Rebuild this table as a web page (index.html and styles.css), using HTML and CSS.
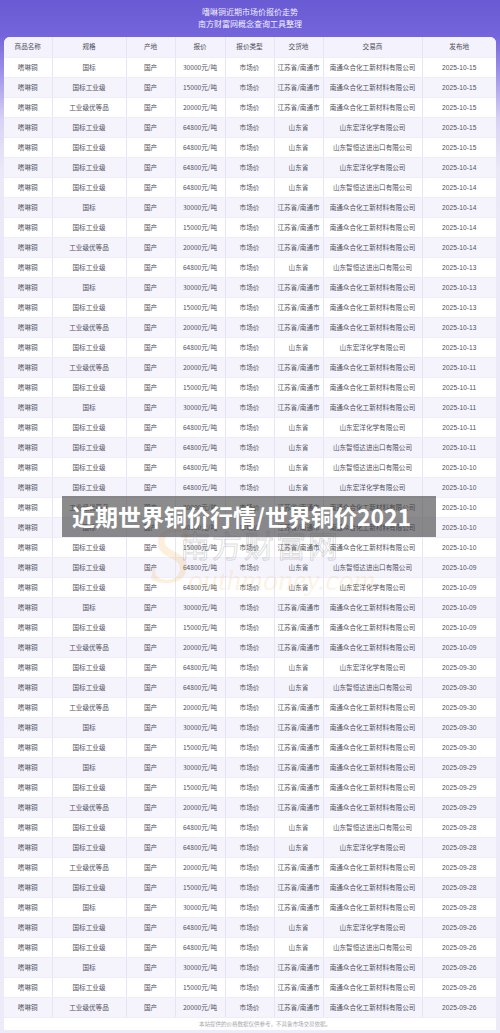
FILE: index.html
```html
<!DOCTYPE html>
<html lang="zh-CN">
<head>
<meta charset="utf-8">
<title>嗜啉铜近期市场价报价走势</title>
<link rel="stylesheet" href="styles.css">
</head>
<body>
<div class="page">
  <header class="hero">
    <div class="hero-line">嗜啉铜近期市场价报价走势</div>
    <div class="hero-line">南方财富网概念查询工具整理</div>
  </header>
  <div class="card">
    <table class="price-table">
      <colgroup>
        <col class="c1"><col class="c2"><col class="c3"><col class="c4"><col class="c5"><col class="c6"><col class="c7"><col class="c8">
      </colgroup>
      <thead>
        <tr><th>商品名称</th><th>规格</th><th>产地</th><th>报价</th><th>报价类型</th><th>交货地</th><th>交易商</th><th>发布地</th></tr>
      </thead>
      <tbody>
        <tr><td>嗜啉铜</td><td>国标</td><td>国产</td><td>30000元/吨</td><td>市场价</td><td>江苏省/南通市</td><td>南通众合化工新材料有限公司</td><td>2025-10-15</td></tr>
        <tr><td>嗜啉铜</td><td>国标工业级</td><td>国产</td><td>15000元/吨</td><td>市场价</td><td>江苏省/南通市</td><td>南通众合化工新材料有限公司</td><td>2025-10-15</td></tr>
        <tr><td>嗜啉铜</td><td>工业级优等品</td><td>国产</td><td>20000元/吨</td><td>市场价</td><td>江苏省/南通市</td><td>南通众合化工新材料有限公司</td><td>2025-10-15</td></tr>
        <tr><td>嗜啉铜</td><td>国标工业级</td><td>国产</td><td>64800元/吨</td><td>市场价</td><td>山东省</td><td>山东宏洋化学有限公司</td><td>2025-10-15</td></tr>
        <tr><td>嗜啉铜</td><td>国标工业级</td><td>国产</td><td>64800元/吨</td><td>市场价</td><td>山东省</td><td>山东智恒达进出口有限公司</td><td>2025-10-15</td></tr>
        <tr><td>嗜啉铜</td><td>国标工业级</td><td>国产</td><td>64800元/吨</td><td>市场价</td><td>山东省</td><td>山东宏洋化学有限公司</td><td>2025-10-14</td></tr>
        <tr><td>嗜啉铜</td><td>国标工业级</td><td>国产</td><td>64800元/吨</td><td>市场价</td><td>山东省</td><td>山东智恒达进出口有限公司</td><td>2025-10-14</td></tr>
        <tr><td>嗜啉铜</td><td>国标</td><td>国产</td><td>30000元/吨</td><td>市场价</td><td>江苏省/南通市</td><td>南通众合化工新材料有限公司</td><td>2025-10-14</td></tr>
        <tr><td>嗜啉铜</td><td>国标工业级</td><td>国产</td><td>15000元/吨</td><td>市场价</td><td>江苏省/南通市</td><td>南通众合化工新材料有限公司</td><td>2025-10-14</td></tr>
        <tr><td>嗜啉铜</td><td>工业级优等品</td><td>国产</td><td>20000元/吨</td><td>市场价</td><td>江苏省/南通市</td><td>南通众合化工新材料有限公司</td><td>2025-10-14</td></tr>
        <tr><td>嗜啉铜</td><td>国标工业级</td><td>国产</td><td>64800元/吨</td><td>市场价</td><td>山东省</td><td>山东智恒达进出口有限公司</td><td>2025-10-13</td></tr>
        <tr><td>嗜啉铜</td><td>国标</td><td>国产</td><td>30000元/吨</td><td>市场价</td><td>江苏省/南通市</td><td>南通众合化工新材料有限公司</td><td>2025-10-13</td></tr>
        <tr><td>嗜啉铜</td><td>国标工业级</td><td>国产</td><td>15000元/吨</td><td>市场价</td><td>江苏省/南通市</td><td>南通众合化工新材料有限公司</td><td>2025-10-13</td></tr>
        <tr><td>嗜啉铜</td><td>工业级优等品</td><td>国产</td><td>20000元/吨</td><td>市场价</td><td>江苏省/南通市</td><td>南通众合化工新材料有限公司</td><td>2025-10-13</td></tr>
        <tr><td>嗜啉铜</td><td>国标工业级</td><td>国产</td><td>64800元/吨</td><td>市场价</td><td>山东省</td><td>山东宏洋化学有限公司</td><td>2025-10-13</td></tr>
        <tr><td>嗜啉铜</td><td>工业级优等品</td><td>国产</td><td>20000元/吨</td><td>市场价</td><td>江苏省/南通市</td><td>南通众合化工新材料有限公司</td><td>2025-10-11</td></tr>
        <tr><td>嗜啉铜</td><td>国标工业级</td><td>国产</td><td>15000元/吨</td><td>市场价</td><td>江苏省/南通市</td><td>南通众合化工新材料有限公司</td><td>2025-10-11</td></tr>
        <tr><td>嗜啉铜</td><td>国标</td><td>国产</td><td>30000元/吨</td><td>市场价</td><td>江苏省/南通市</td><td>南通众合化工新材料有限公司</td><td>2025-10-11</td></tr>
        <tr><td>嗜啉铜</td><td>国标工业级</td><td>国产</td><td>64800元/吨</td><td>市场价</td><td>山东省</td><td>山东宏洋化学有限公司</td><td>2025-10-11</td></tr>
        <tr><td>嗜啉铜</td><td>国标工业级</td><td>国产</td><td>64800元/吨</td><td>市场价</td><td>山东省</td><td>山东智恒达进出口有限公司</td><td>2025-10-11</td></tr>
        <tr><td>嗜啉铜</td><td>国标工业级</td><td>国产</td><td>64800元/吨</td><td>市场价</td><td>山东省</td><td>山东智恒达进出口有限公司</td><td>2025-10-10</td></tr>
        <tr><td>嗜啉铜</td><td>国标工业级</td><td>国产</td><td>64800元/吨</td><td>市场价</td><td>山东省</td><td>山东宏洋化学有限公司</td><td>2025-10-10</td></tr>
        <tr><td>嗜啉铜</td><td>工业级优等品</td><td>国产</td><td>20000元/吨</td><td>市场价</td><td>江苏省/南通市</td><td>南通众合化工新材料有限公司</td><td>2025-10-10</td></tr>
        <tr><td>嗜啉铜</td><td>国标</td><td>国产</td><td>30000元/吨</td><td>市场价</td><td>江苏省/南通市</td><td>南通众合化工新材料有限公司</td><td>2025-10-10</td></tr>
        <tr><td>嗜啉铜</td><td>国标工业级</td><td>国产</td><td>15000元/吨</td><td>市场价</td><td>江苏省/南通市</td><td>南通众合化工新材料有限公司</td><td>2025-10-10</td></tr>
        <tr><td>嗜啉铜</td><td>国标工业级</td><td>国产</td><td>64800元/吨</td><td>市场价</td><td>山东省</td><td>山东智恒达进出口有限公司</td><td>2025-10-09</td></tr>
        <tr><td>嗜啉铜</td><td>国标工业级</td><td>国产</td><td>64800元/吨</td><td>市场价</td><td>山东省</td><td>山东宏洋化学有限公司</td><td>2025-10-09</td></tr>
        <tr><td>嗜啉铜</td><td>国标</td><td>国产</td><td>30000元/吨</td><td>市场价</td><td>江苏省/南通市</td><td>南通众合化工新材料有限公司</td><td>2025-10-09</td></tr>
        <tr><td>嗜啉铜</td><td>国标工业级</td><td>国产</td><td>15000元/吨</td><td>市场价</td><td>江苏省/南通市</td><td>南通众合化工新材料有限公司</td><td>2025-10-09</td></tr>
        <tr><td>嗜啉铜</td><td>工业级优等品</td><td>国产</td><td>20000元/吨</td><td>市场价</td><td>江苏省/南通市</td><td>南通众合化工新材料有限公司</td><td>2025-10-09</td></tr>
        <tr><td>嗜啉铜</td><td>国标工业级</td><td>国产</td><td>64800元/吨</td><td>市场价</td><td>山东省</td><td>山东宏洋化学有限公司</td><td>2025-09-30</td></tr>
        <tr><td>嗜啉铜</td><td>国标工业级</td><td>国产</td><td>64800元/吨</td><td>市场价</td><td>山东省</td><td>山东智恒达进出口有限公司</td><td>2025-09-30</td></tr>
        <tr><td>嗜啉铜</td><td>工业级优等品</td><td>国产</td><td>20000元/吨</td><td>市场价</td><td>江苏省/南通市</td><td>南通众合化工新材料有限公司</td><td>2025-09-30</td></tr>
        <tr><td>嗜啉铜</td><td>国标</td><td>国产</td><td>30000元/吨</td><td>市场价</td><td>江苏省/南通市</td><td>南通众合化工新材料有限公司</td><td>2025-09-30</td></tr>
        <tr><td>嗜啉铜</td><td>国标工业级</td><td>国产</td><td>15000元/吨</td><td>市场价</td><td>江苏省/南通市</td><td>南通众合化工新材料有限公司</td><td>2025-09-30</td></tr>
        <tr><td>嗜啉铜</td><td>国标</td><td>国产</td><td>30000元/吨</td><td>市场价</td><td>江苏省/南通市</td><td>南通众合化工新材料有限公司</td><td>2025-09-29</td></tr>
        <tr><td>嗜啉铜</td><td>国标工业级</td><td>国产</td><td>15000元/吨</td><td>市场价</td><td>江苏省/南通市</td><td>南通众合化工新材料有限公司</td><td>2025-09-29</td></tr>
        <tr><td>嗜啉铜</td><td>工业级优等品</td><td>国产</td><td>20000元/吨</td><td>市场价</td><td>江苏省/南通市</td><td>南通众合化工新材料有限公司</td><td>2025-09-29</td></tr>
        <tr><td>嗜啉铜</td><td>国标工业级</td><td>国产</td><td>64800元/吨</td><td>市场价</td><td>山东省</td><td>山东智恒达进出口有限公司</td><td>2025-09-28</td></tr>
        <tr><td>嗜啉铜</td><td>国标工业级</td><td>国产</td><td>64800元/吨</td><td>市场价</td><td>山东省</td><td>山东宏洋化学有限公司</td><td>2025-09-28</td></tr>
        <tr><td>嗜啉铜</td><td>工业级优等品</td><td>国产</td><td>20000元/吨</td><td>市场价</td><td>江苏省/南通市</td><td>南通众合化工新材料有限公司</td><td>2025-09-28</td></tr>
        <tr><td>嗜啉铜</td><td>国标工业级</td><td>国产</td><td>15000元/吨</td><td>市场价</td><td>江苏省/南通市</td><td>南通众合化工新材料有限公司</td><td>2025-09-28</td></tr>
        <tr><td>嗜啉铜</td><td>国标</td><td>国产</td><td>30000元/吨</td><td>市场价</td><td>江苏省/南通市</td><td>南通众合化工新材料有限公司</td><td>2025-09-28</td></tr>
        <tr><td>嗜啉铜</td><td>国标工业级</td><td>国产</td><td>64800元/吨</td><td>市场价</td><td>山东省</td><td>山东宏洋化学有限公司</td><td>2025-09-26</td></tr>
        <tr><td>嗜啉铜</td><td>国标工业级</td><td>国产</td><td>64800元/吨</td><td>市场价</td><td>山东省</td><td>山东智恒达进出口有限公司</td><td>2025-09-26</td></tr>
        <tr><td>嗜啉铜</td><td>国标</td><td>国产</td><td>30000元/吨</td><td>市场价</td><td>江苏省/南通市</td><td>南通众合化工新材料有限公司</td><td>2025-09-26</td></tr>
        <tr><td>嗜啉铜</td><td>国标工业级</td><td>国产</td><td>15000元/吨</td><td>市场价</td><td>江苏省/南通市</td><td>南通众合化工新材料有限公司</td><td>2025-09-26</td></tr>
        <tr><td>嗜啉铜</td><td>工业级优等品</td><td>国产</td><td>20000元/吨</td><td>市场价</td><td>江苏省/南通市</td><td>南通众合化工新材料有限公司</td><td>2025-09-26</td></tr>
      </tbody>
    </table>
    <div class="note">本站提供的价格数据仅供参考，不具备市场交易依据。</div>
  </div>
  <div class="watermark" aria-hidden="true">
    <span class="wm-s">S</span>
    <span class="wm-cn">南方财富网</span>
    <span class="wm-en">outhmoney.com</span>
  </div>
  <div class="banner">近期世界铜价行情/世界铜价2021</div>
</div>
</body>
</html>
```

FILE: styles.css
```css
html, body {
  margin: 0;
  padding: 0;
}
body {
  width: 500px;
  height: 1033px;
  overflow: hidden;
  background: #ece9f8;
  font-family: "Noto Sans CJK SC", "Noto Sans", sans-serif;
}
.page {
  position: relative;
  width: 500px;
  height: 1033px;
  background: linear-gradient(180deg, #6a5ad3 0px, #7565dc 36px, #9a8fe8 70px, #d8d3f4 120px, #ebe8f8 170px, #eeebf9 100%);
}
.hero {
  height: 37px;
  box-sizing: border-box;
  padding-top: 6px;
  text-align: center;
  color: rgba(255, 255, 255, 0.92);
  font-size: 8px;
  line-height: 12px;
}
.card {
  margin: 0 4px;
  background: #ffffff;
  border-radius: 6px 6px 0 0;
  overflow: hidden;
}
.price-table {
  width: 492px;
  table-layout: fixed;
  border-collapse: collapse;
  font-size: 6.6px;
  color: #50505c;
}
.c1 { width: 48px; }
.c2 { width: 74px; }
.c3 { width: 49px; }
.c4 { width: 50px; }
.c5 { width: 49px; }
.c6 { width: 49px; }
.c7 { width: 99px; }
.c8 { width: 74px; }
.price-table th,
.price-table td {
  height: 20px;
  padding: 0;
  text-align: center;
  vertical-align: middle;
  white-space: nowrap;
  overflow: hidden;
  border-left: 1px solid #e7e4f6;
  border-bottom: 1px solid #efedf9;
  box-sizing: border-box;
  line-height: 19px;
}
.price-table th:first-child,
.price-table td:first-child {
  border-left: none;
}
.price-table th {
  font-weight: normal;
  color: #4d4d5a;
  background: #f4f2fc;
}
.price-table tbody tr:nth-child(even) td {
  background: #f5f4fd;
}
.price-table td:nth-child(8) {
  font-family: "Liberation Sans", "Noto Sans", sans-serif;
  letter-spacing: 0.1px;
}
.note {
  height: 12px;
  line-height: 12px;
  font-size: 5.5px;
  color: #a8a8b4;
  text-align: center;
  padding-left: 30px;
}
.banner {
  position: absolute;
  left: 62px;
  top: 496px;
  width: 374px;
  height: 41px;
  background: rgba(70, 70, 70, 0.62);
  color: #ffffff;
  font-size: 23px;
  font-weight: bold;
  line-height: 41px;
  padding-left: 10px;
  box-sizing: border-box;
  white-space: nowrap;
  overflow: hidden;
}
.watermark {
  position: absolute;
  left: 150px;
  top: 520px;
  width: 200px;
  height: 90px;
  pointer-events: none;
}
.wm-s {
  position: absolute;
  left: 0;
  top: -10px;
  font-family: "Liberation Serif", serif;
  font-style: italic;
  font-size: 80px;
  line-height: 90px;
  color: rgba(240, 175, 80, 0.2);
}
.wm-cn {
  position: absolute;
  left: 30px;
  top: 6px;
  font-size: 30px;
  line-height: 36px;
  letter-spacing: 2px;
  color: transparent;
  -webkit-text-stroke: 1px rgba(130, 130, 130, 0.28);
}
.wm-en {
  position: absolute;
  left: 38px;
  top: 42px;
  font-family: "Liberation Serif", serif;
  font-style: italic;
  font-size: 30px;
  line-height: 36px;
  color: rgba(240, 180, 90, 0.18);
}
```
